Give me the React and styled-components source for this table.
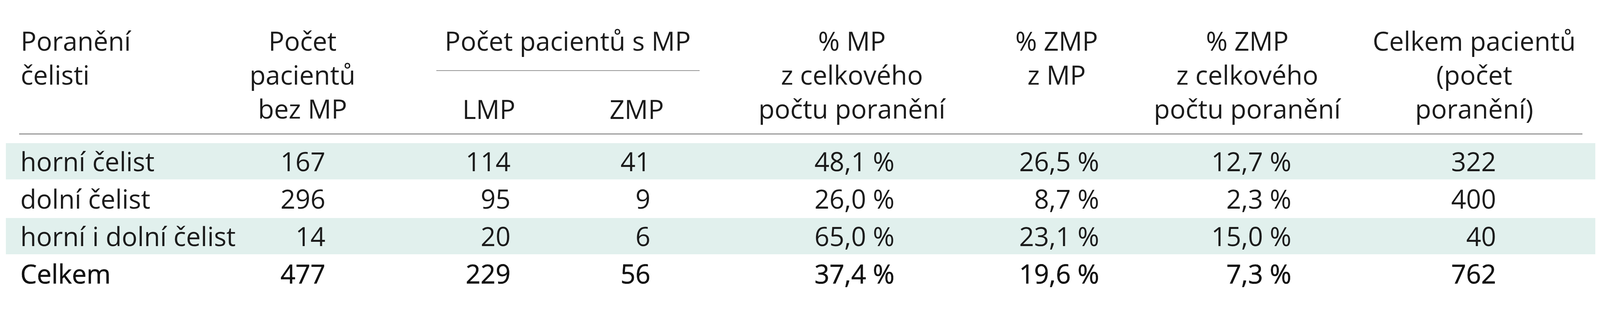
import styled, { createGlobalStyle } from "styled-components";

const GlobalStyle = createGlobalStyle`
  html, body {
    margin: 0;
    padding: 0;
    background: #ffffff;
  }
  body {
    font-family: "Open Sans", "Noto Sans", "DejaVu Sans", sans-serif;
    color: #1b1b1b;
  }
`;

// column widths in px, header centring offset, right padding of the numbers
const columns = [
  { width: 597 },
  { width: 401, shift: -38, numPad: 180 },
  { width: 427, shift: 25, numPad: 133 },
  { width: 464, shift: -42, numPad: 239 },
  { width: 538, shift: 8, numPad: 152 },
  { width: 506, shift: 10, numPad: 134 },
  { width: 536, shift: -23, numPad: 178 },
  { width: 600, shift: -10, numPad: 254 },
];

const template = columns.map((c) => `${c.width}px`).join(" ");

const Table = styled.div`
  width: 4069px;
  margin-left: 15px;
  padding-top: 61px;
  font-size: 67px;
`;

const Head = styled.div`
  display: grid;
  grid-template-columns: ${template};
  grid-template-rows: 121px 141px;
  line-height: 87px;
  padding-bottom: 19px;
`;

const HeadLabel = styled.div`
  grid-row: 1 / span 2;
  padding-left: 38px;
  white-space: nowrap;
`;

const HeadCell = styled.div`
  grid-row: ${(p) => p.$row || "1 / span 2"};
  grid-column: ${(p) => p.$col || "auto"};
  display: flex;
  flex-direction: column;
  align-items: center;
  justify-content: ${(p) => (p.$bottom ? "flex-end" : "flex-start")};
  white-space: nowrap;
  padding-left: ${(p) => Math.max(0, 2 * (p.$shift || 0))}px;
  padding-right: ${(p) => Math.max(0, -2 * (p.$shift || 0))}px;
`;

const Group = styled.div`
  grid-column: 3 / span 2;
  grid-row: 1;
  display: flex;
  flex-direction: column;
  align-items: center;
  white-space: nowrap;
`;

const GroupTitle = styled.div`
  padding-right: 10px;
`;

const SubRule = styled.div`
  align-self: stretch;
  height: 2px;
  background: #979797;
  margin: 32px 113px 0 104px;
`;

const Rule = styled.div`
  height: 3px;
  background: #999999;
  margin: 0 33px 22px 34px;
`;

const Row = styled.div`
  display: grid;
  grid-template-columns: ${template};
  height: 96px;
  line-height: 92px;
  color: ${(p) => (p.$total ? "#111111" : "#1b1b1b")};
  -webkit-text-stroke: ${(p) => (p.$total ? "0.7px #111111" : "0")};
  background: ${(p) =>
    p.$shaded
      ? "linear-gradient(#e1f0ed, #e1f0ed) top left / 100% 93px no-repeat"
      : "transparent"};
`;

const Label = styled.div`
  padding-left: 37px;
  white-space: nowrap;
`;

const Num = styled.div`
  text-align: right;
  white-space: nowrap;
  padding-right: ${(p) => p.$pad}px;
`;

const rows = [
  { label: "horní čelist", values: ["167", "114", "41", "48,1 %", "26,5 %", "12,7 %", "322"] },
  { label: "dolní čelist", values: ["296", "95", "9", "26,0 %", "8,7 %", "2,3 %", "400"] },
  { label: "horní i dolní čelist", values: ["14", "20", "6", "65,0 %", "23,1 %", "15,0 %", "40"] },
  { label: "Celkem", values: ["477", "229", "56", "37,4 %", "19,6 %", "7,3 %", "762"], total: true },
];

function Lines({ items }) {
  return items.map((t) => <span key={t}>{t}</span>);
}

function App() {
  return (
    <>
      <GlobalStyle />
      <Table>
        <Head>
          <HeadLabel>
            Poranění
            <br />
            čelisti
          </HeadLabel>
          <HeadCell $shift={columns[1].shift}>
            <Lines items={["Počet", "pacientů", "bez MP"]} />
          </HeadCell>
          <Group>
            <GroupTitle>Počet pacientů s MP</GroupTitle>
            <SubRule />
          </Group>
          <HeadCell $row="2" $col="3" $bottom $shift={columns[2].shift}>
            LMP
          </HeadCell>
          <HeadCell $row="2" $col="4" $bottom $shift={columns[3].shift}>
            ZMP
          </HeadCell>
          <HeadCell $col="5" $shift={columns[4].shift}>
            <Lines items={["% MP", "z celkového", "počtu poranění"]} />
          </HeadCell>
          <HeadCell $col="6" $shift={columns[5].shift}>
            <Lines items={["% ZMP", "z MP"]} />
          </HeadCell>
          <HeadCell $col="7" $shift={columns[6].shift}>
            <Lines items={["% ZMP", "z celkového", "počtu poranění"]} />
          </HeadCell>
          <HeadCell $col="8" $shift={columns[7].shift}>
            <Lines items={["Celkem pacientů", "(počet", "poranění)"]} />
          </HeadCell>
        </Head>
        <Rule />
        {rows.map((r, i) => (
          <Row key={r.label} $shaded={i % 2 === 0} $total={r.total}>
            <Label>{r.label}</Label>
            {r.values.map((v, j) => (
              <Num key={j} $pad={columns[j + 1].numPad}>
                {v}
              </Num>
            ))}
          </Row>
        ))}
      </Table>
    </>
  );
}

export default App;
